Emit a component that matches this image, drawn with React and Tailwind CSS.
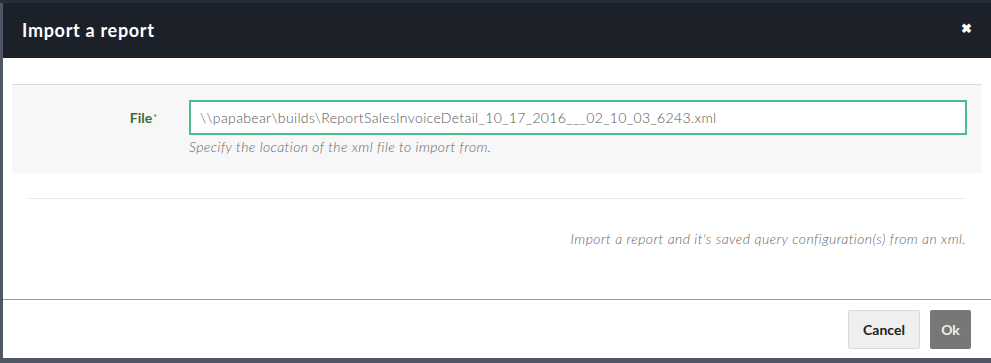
import React from 'react';

const ImportReportModal = () => {
  return (
    <div className="w-[991px] h-[363px] overflow-hidden bg-[#4f5767] font-['Lato','Open_Sans',sans-serif]">
      {/* backdrop strip above the dialog */}
      <div className="h-[3px] bg-[#252d3a]" />
      <div className="ml-[3px] h-[355px] bg-white flex flex-col">
        {/* Header */}
        <div className="h-[55px] shrink-0 bg-[#1b2029] flex items-center justify-between pl-[19px] pr-[20px]">
          <h1 className="text-[18px] font-bold text-white tracking-[0.7px]">Import a report</h1>
          <button className="text-white text-[13px] font-black leading-none mr-[-1px] mt-[-5px]">✖</button>
        </div>

        {/* Body */}
        <div className="flex-1 px-[9px] pt-[26px]">
          <div className="border-t border-[#dcdcdc] bg-[#f7f7f7] pt-[15px] pb-[16px] pr-[15px] flex">
            <label className="w-[177px] shrink-0 text-right pr-[32px] pt-[7px] text-[14px] font-bold text-[#3e6b36]">
              File<sup className="text-[9px] font-normal ml-[1px] relative top-[-2px]">*</sup>
            </label>
            <div className="flex-1">
              <div className="h-[35px] border-2 border-[#4dbc89] bg-white flex items-center pl-[9px] text-[14px] tracking-[0.35px] font-light text-[#555]">
                \\papabear\builds\ReportSalesInvoiceDetail_10_17_2016___02_10_03_6243.xml
              </div>
              <p className="mt-[1px] text-[14px] tracking-[0.4px] italic font-light text-[#666]">
                Specify the location of the xml file to import from.
              </p>
            </div>
          </div>
          <div className="mx-[16px] mt-[25px] border-t border-[#ececec]" />
          <p className="mr-[16px] mt-[29px] text-right text-[14px] tracking-[0.43px] italic font-light text-[#666]">
            Import a report and it's saved query configuration(s) from an xml.
          </p>
        </div>

        {/* Footer */}
        <div className="h-[59px] shrink-0 border-t border-[#9a9a9a] flex items-center justify-end gap-[10px] pr-[20px]">
          <button className="h-[39px] w-[72px] bg-[#efefef] border border-[#d9d9d9] rounded-[2px] text-[14px] font-bold text-[#222]">
            Cancel
          </button>
          <button className="h-[39px] w-[41px] bg-[#777777] rounded-[2px] text-[14px] font-bold text-[#eee]">
            Ok
          </button>
        </div>
      </div>
    </div>
  );
};

export default function App() {
  return <ImportReportModal />;
}
